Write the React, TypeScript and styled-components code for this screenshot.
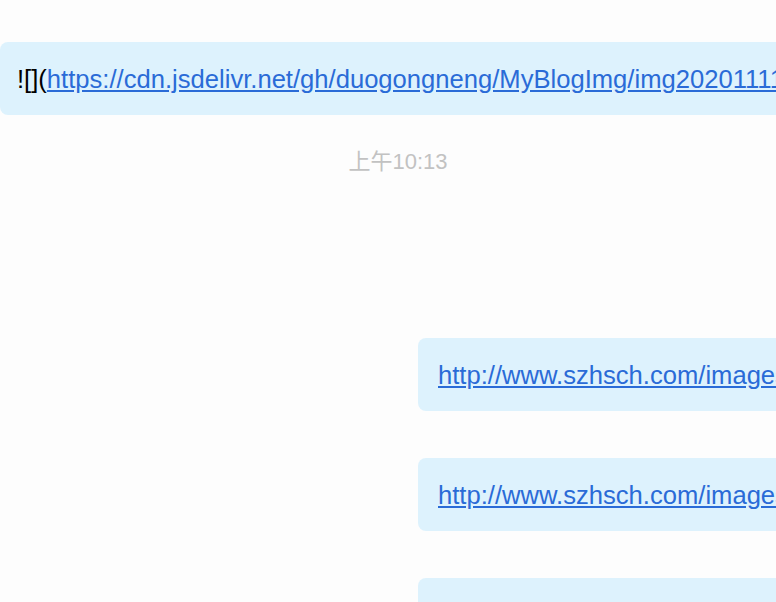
import React from "react";
import styled, { createGlobalStyle } from "styled-components";

const Global = createGlobalStyle`
  html, body {
    margin: 0;
    padding: 0;
    background: #fdfdfd;
    overflow: hidden;
  }
  body {
    font-family: "Liberation Sans", Arial, "Noto Sans CJK SC", sans-serif;
  }
`;

const Chat = styled.div`
  width: 776px;
  height: 602px;
  overflow: hidden;
  display: flex;
  flex-direction: column;
  padding-top: 42px;
  box-sizing: border-box;
`;

const Row = styled.div<{ $side: "left" | "right"; $gap: number }>`
  display: flex;
  justify-content: flex-start;
  padding-left: ${(p) => (p.$side === "right" ? "418px" : "0")};
  margin-bottom: ${(p) => p.$gap}px;
  min-width: 0;
`;

const Bubble = styled.div<{ $pad: number }>`
  background: #ddf2fd;
  border-radius: 8px;
  padding: 1px ${(p) => p.$pad}px 0;
  height: 73px;
  display: flex;
  align-items: center;
  white-space: nowrap;
  font-size: 25.6px;
  color: #000;
  flex-shrink: 0;
  width: 1600px;
  box-sizing: border-box;
`;

const Plain = styled.span`
  color: #000;
`;

const Link = styled.a`
  color: #2a6bd7;
  text-decoration: underline;
  text-underline-offset: 2px;
`;

const Time = styled.div`
  text-align: center;
  color: #c2c2c2;
  font-size: 22px;
  line-height: 26px;
  width: 796px;
  margin-top: 34px;
  margin-bottom: 163px;
  font-family: "Liberation Sans", Arial, "Noto Sans CJK SC", sans-serif;
`;

export default function App() {
  return (
    <>
      <Global />
      <Chat>
        <Row $side="left" $gap={0}>
          <Bubble $pad={17}>
            <Plain>![](</Plain>
            <Link href="#">https://cdn.jsdelivr.net/gh/duogongneng/MyBlogImg/img202011110945.png</Link>
            <Plain>)</Plain>
          </Bubble>
        </Row>
        <Time>上午10:13</Time>
        <Row $side="right" $gap={47}>
          <Bubble $pad={20}>
            <Link href="#">http://www.szhsch.com/images/logo.png</Link>
          </Bubble>
        </Row>
        <Row $side="right" $gap={47}>
          <Bubble $pad={20}>
            <Link href="#">http://www.szhsch.com/images/banner.jpg</Link>
          </Bubble>
        </Row>
        <Row $side="right" $gap={0}>
          <Bubble $pad={20}>
            <Link href="#">http://www.szhsch.com/images/about.jpg</Link>
          </Bubble>
        </Row>
      </Chat>
    </>
  );
}
